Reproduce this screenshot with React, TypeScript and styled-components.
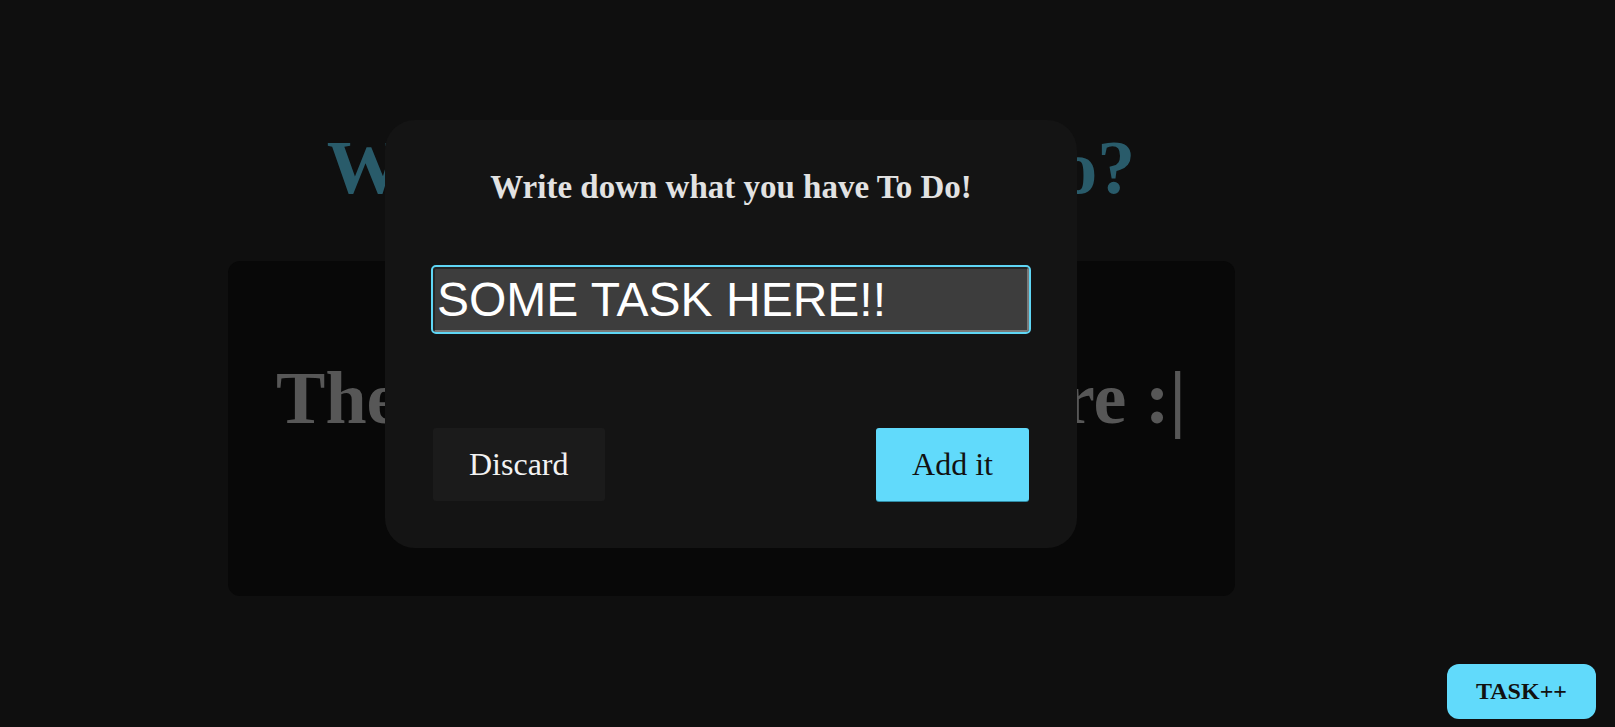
import React from "react";
import styled, { createGlobalStyle } from "styled-components";

const GlobalStyle = createGlobalStyle`
  html, body {
    margin: 0;
    padding: 0;
    background: #0f0f0f;
    font-family: "Liberation Serif", "Times New Roman", serif;
  }
  * { box-sizing: border-box; }
`;

const Page = styled.div`
  min-height: 727px;
  padding: 0 153px 0 0;
  display: flex;
  flex-direction: column;
  align-items: center;
`;

const Heading = styled.h1`
  margin: 123px 0 0;
  font-size: 76px;
  font-weight: 700;
  color: #295b6a;
  line-height: 88px;
  text-align: center;
`;

const ListBox = styled.section`
  margin-top: 50px;
  width: 1007px;
  height: 335px;
  background: #080808;
  border-radius: 12px;
  padding-top: 95px;
  display: flex;
  justify-content: center;
  align-items: flex-start;
`;

const EmptyText = styled.h2`
  margin: 0;
  font-size: 74px;
  font-weight: 700;
  line-height: 85px;
  color: #575757;
  white-space: nowrap;
`;

const Overlay = styled.div`
  position: fixed;
  inset: 0;
  padding: 120px 153px 0 0;
  display: flex;
  justify-content: center;
  align-items: flex-start;
`;

const Modal = styled.div`
  width: 692px;
  background: #141414;
  border-radius: 30px;
  padding: 48px 48px 47px;
  display: flex;
  flex-direction: column;
`;

const ModalTitle = styled.h1`
  margin: 0;
  font-size: 33px;
  font-weight: 700;
  line-height: 38px;
  color: #e2e2e2;
  text-align: center;
`;

const TaskInput = styled.input`
  margin-top: 61px;
  width: 100%;
  height: 65px;
  padding: 1px 2px;
  font-family: "Liberation Sans", Arial, sans-serif;
  font-size: 48px;
  color: #ffffff;
  background: #3d3d3d;
  border: 2px inset #7a7a7a;
  border-radius: 3px;
  outline: 2.5px solid #5fd6f5;
  outline-offset: 0;
`;

const ButtonRow = styled.div`
  margin-top: 96px;
  display: flex;
  justify-content: space-between;
`;

const Button = styled.button<{ $primary?: boolean }>`
  height: 73px;
  padding: 0 36px;
  border: none;
  border-radius: 3px;
  font-family: "Liberation Serif", "Times New Roman", serif;
  font-size: 32px;
  font-weight: 400;
  cursor: pointer;
  background: ${(p) => (p.$primary ? "#61dafb" : "#1b1b1b")};
  color: ${(p) => (p.$primary ? "#111111" : "#f2f2f2")};
  box-shadow: ${(p) => (p.$primary ? "0 1px 0 #2f8ca6" : "none")};
`;

const FloatingButton = styled.button`
  position: fixed;
  right: 19px;
  bottom: 8px;
  height: 55px;
  padding: 0 29px;
  border: none;
  border-radius: 12px;
  background: #61dafb;
  color: #111111;
  font-family: "Liberation Serif", "Times New Roman", serif;
  font-size: 24px;
  font-weight: 700;
  cursor: pointer;
`;

export default function App() {
  return (
    <>
      <GlobalStyle />
      <Page>
        <Heading>What do you have to do?</Heading>
        <ListBox>
          <EmptyText>There is nothing to do here :|</EmptyText>
        </ListBox>
      </Page>
      <Overlay>
        <Modal>
          <ModalTitle>Write down what you have To Do!</ModalTitle>
          <TaskInput defaultValue="SOME TASK HERE!!" />
          <ButtonRow>
            <Button>Discard</Button>
            <Button $primary>Add it</Button>
          </ButtonRow>
        </Modal>
      </Overlay>
      <FloatingButton>TASK++</FloatingButton>
    </>
  );
}
